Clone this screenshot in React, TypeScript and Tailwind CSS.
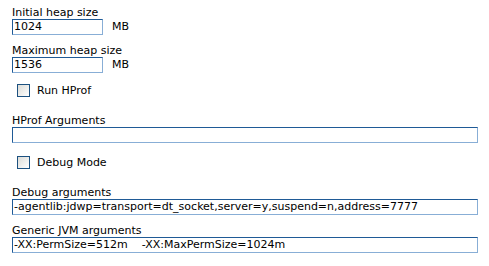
import React from "react";

const font = { fontFamily: '"DejaVu Sans", Verdana, sans-serif' };

function Field({ label, value, wide, unit, className = "" }: { label: string; value: string; wide?: boolean; unit?: string; className?: string }) {
  return (
    <div className={className}>
      <div className="h-[13px] leading-[13px] text-[11px] text-black">{label}</div>
      <div className="flex items-center">
        <div
          className={`${wide ? "w-[466px]" : "w-[91px]"} h-[16px] border border-t-[#1f5a96] border-l-[#1f5a96] border-r-[#88aed6] border-b-[#88aed6] bg-white pl-[1px] text-[11px] leading-[14px] text-black whitespace-pre overflow-hidden`}
        >
          {value}
        </div>
        {unit && <span className="ml-[9px] text-[11px] leading-[14px] text-black">{unit}</span>}
      </div>
    </div>
  );
}

function Check({ label, className = "" }: { label: string; className?: string }) {
  return (
    <div className={`flex items-center pl-[5px] ${className}`}>
      <div className="w-[13px] h-[13px] border border-[#1c5180] bg-gradient-to-br from-[#dcdcd7] to-white" />
      <span className="ml-[7px] text-[11px] leading-[13px] text-black">{label}</span>
    </div>
  );
}

export default function App() {
  return (
    <div className="w-[489px] h-[266px] bg-white overflow-hidden pl-[12px] pt-[6px]" style={font}>
      <Field label="Initial heap size" value="1024" unit="MB" />
      <Field label="Maximum heap size" value="1536" unit="MB" className="mt-[9px]" />
      <Check label="Run HProf" className="mt-[11px]" />
      <Field label="HProf Arguments" value="" wide className="mt-[17px]" />
      <Check label="Debug Mode" className="mt-[13px]" />
      <Field
        label="Debug arguments"
        value="-agentlib:jdwp=transport=dt_socket,server=y,suspend=n,address=7777"
        wide
        className="mt-[17px]"
      />
      <Field label="Generic JVM arguments" value="-XX:PermSize=512m    -XX:MaxPermSize=1024m" wide className="mt-[9px]" />
    </div>
  );
}
